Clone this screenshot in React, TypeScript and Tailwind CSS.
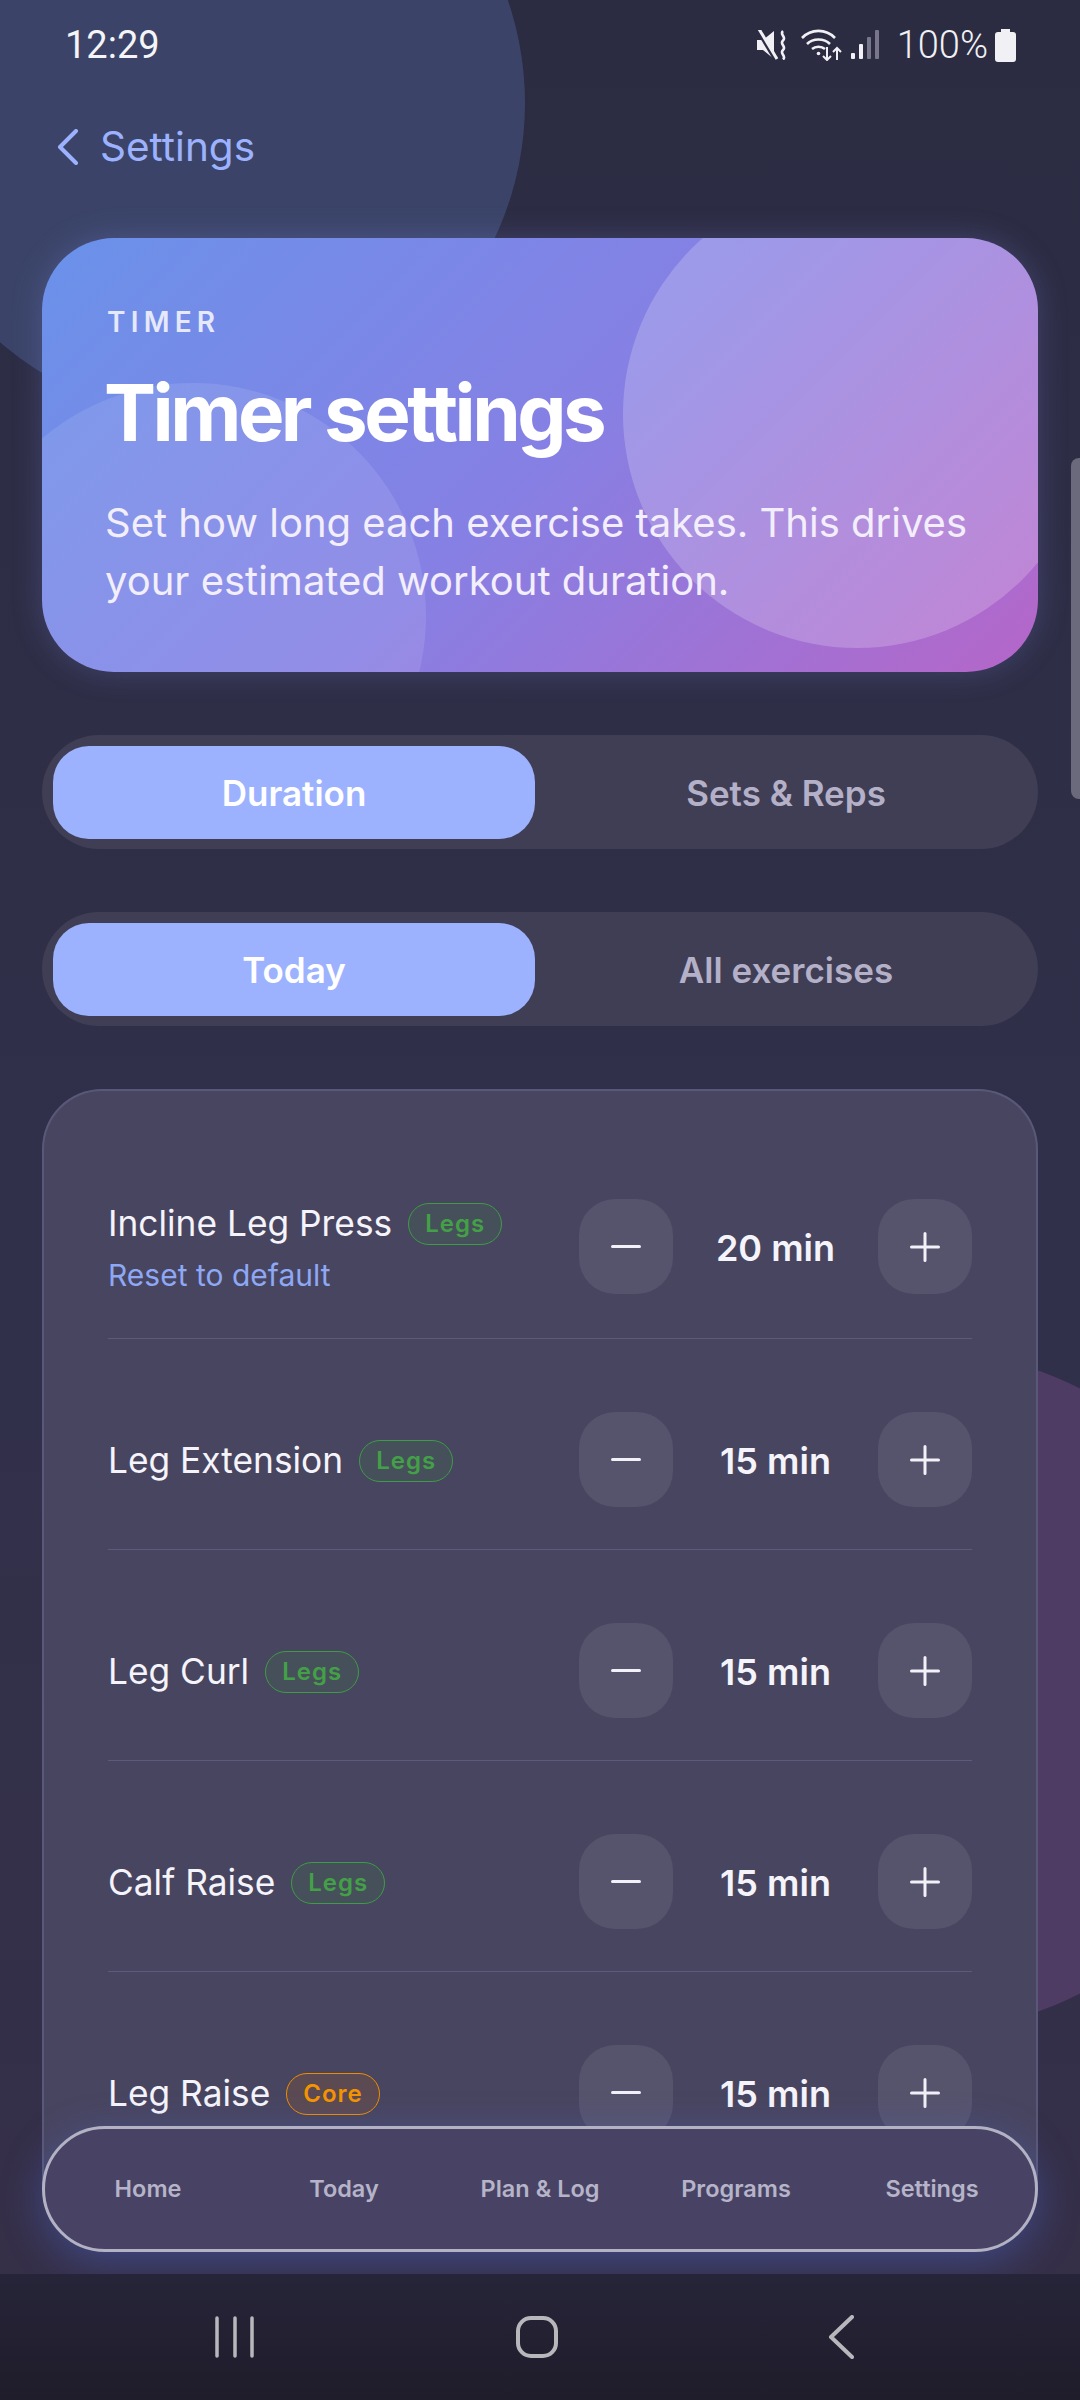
import React from "react";

const exercises = [
  { name: "Incline Leg Press", tag: "Legs", mins: 20, reset: true },
  { name: "Leg Extension", tag: "Legs", mins: 15 },
  { name: "Leg Curl", tag: "Legs", mins: 15 },
  { name: "Calf Raise", tag: "Legs", mins: 15 },
  { name: "Leg Raise", tag: "Core", mins: 15 },
];

const navItems = ["Home", "Today", "Plan & Log", "Programs", "Settings"];

const StatusIcons = () => (
  <div className="flex items-center">
    {/* muted */}
    <svg width="30" height="30" viewBox="0 0 30 30" className="mr-[14px]">
      <path d="M0 10h6l11-9v28l-11-9H0z" fill="#f1f1f5" />
      <path d="M0 -1l18 30" stroke="#2b2b42" strokeWidth="4" />
      <path d="M2 -1l18 30" stroke="#f1f1f5" strokeWidth="3" />
      <path d="M26 1c-4 3.500 4 6 0 9.500s4 6 0 9.500 4 6 0 9.500" stroke="#f1f1f5" strokeWidth="2.6" fill="none" />
    </svg>
    {/* wifi */}
    <svg width="41" height="32" viewBox="0 0 41 32" className="mr-[9px]" fill="none" stroke="#f1f1f5" strokeWidth="2.6">
      <path d="M1 9c9-9.500 24-9.500 33 0" />
      <path d="M6 15c6-6 17-6 23 0" />
      <path d="M11 20c3.500-3 9.500-3 13 0" />
      <circle cx="17.500" cy="24.500" r="1.800" fill="#f1f1f5" stroke="none" />
      <path d="M26 18v13M22 27l4 4 4-4M36 31V19M32 23l4-4 4 4" strokeWidth="2" />
    </svg>
    {/* signal */}
    <svg width="28" height="30" viewBox="0 0 28 30" className="mr-[18px]">
      <rect x="0" y="23" width="4" height="6" rx="1" fill="#f1f1f5" />
      <rect x="8" y="14" width="4" height="15" rx="1" fill="#f1f1f5" />
      <rect x="16" y="7" width="4" height="22" rx="1" fill="#77768a" />
      <rect x="24" y="0" width="4" height="29" rx="1" fill="#77768a" />
    </svg>
    <span className="font-['Roboto',sans-serif] text-[38px] font-light leading-none text-[#f1f1f5]">100%</span>
    <svg width="21" height="33" viewBox="0 0 21 33" className="ml-[7px]">
      <path d="M6 0h9v3h3a3 3 0 0 1 3 3v24a3 3 0 0 1-3 3H3a3 3 0 0 1-3-3V6a3 3 0 0 1 3-3h3z" fill="#f1f1f5" />
    </svg>
  </div>
);

const Stepper = ({ mins }: { mins: number }) => (
  <div className="flex items-center shrink-0">
    <button className="flex h-[95px] w-[94px] items-center justify-center rounded-[36px] bg-[#56536c]">
      <span className="h-[3px] w-[30px] rounded-full bg-[#f2f1f8]"></span>
    </button>
    <span className="w-[205px] pt-[2px] text-center text-[36px] font-semibold leading-none text-[#f5f4fb]">{mins} min</span>
    <button className="relative flex h-[95px] w-[94px] items-center justify-center rounded-[36px] bg-[#56536c]">
      <svg width="30" height="30" viewBox="0 0 30 30" stroke="#f2f1f8" strokeWidth="3" strokeLinecap="round">
        <path d="M1.500 15h27M15 1.500v27" />
      </svg>
    </button>
  </div>
);

const ExerciseRow = ({ name, tag, mins, reset, last }: { name: string; tag: string; mins: number; reset?: boolean; last?: boolean }) => (
  <div className={`flex items-center justify-between ${last ? "" : "border-b border-[#5e5a7c]"} ${reset ? "pt-[108px] pb-[44px]" : "pt-[73px] pb-[42px]"}`}>
    <div className="min-w-0 pt-[2px]">
      <div className="flex items-center">
        <span className="text-[35.300px] leading-[44px] text-[#f5f4fb]">{name}</span>
        <span
          className={`ml-[16px] flex h-[42px] items-center rounded-full border px-[16px] text-[24px] font-semibold tracking-[1px] ${
            tag === "Core"
              ? "border-[#f08c00] bg-[#5b4a52] text-[#f59300]"
              : "border-[#3d9c45] bg-[#46505a] text-[#43a047]"
          }`}
        >
          {tag}
        </span>
      </div>
      {reset && <div className="mt-[10px] text-[30px] leading-[38px] text-[#8ea8f5]">Reset to default</div>}
    </div>
    <Stepper mins={mins} />
  </div>
);

const SegmentedControl = ({ active, other }: { active: string; other: string }) => (
  <div className="flex h-[114px] items-center rounded-full bg-[#403e55] px-[11px]">
    <div className="flex h-[93px] w-[482px] items-center justify-center rounded-[36px] bg-[#9db2fe] pt-[2px] text-[35px] font-semibold text-white">
      {active}
    </div>
    <div className="ml-[10px] flex-1 pt-[2px] text-center text-[35px] font-semibold text-[#b3b0c8]">{other}</div>
  </div>
);

export default function App() {
  return (
    <div className="relative h-[2400px] w-[1080px] overflow-hidden bg-gradient-to-b from-[#2b2b42] via-[#30304a] to-[#362f48] font-['Inter',sans-serif]">
      {/* background blobs */}
      <div className="absolute left-[-109px] top-[-214px] h-[634px] w-[634px] rounded-full bg-[#3b4468]"></div>
      <div className="absolute left-[585px] top-[1351px] h-[680px] w-[680px] rounded-full bg-[#4f3c64]"></div>

      <div className="relative flex h-full flex-col">
        {/* status bar */}
        <div className="flex h-[90px] items-center justify-between pl-[65px] pr-[64px]">
          <span className="font-['Roboto',sans-serif] text-[38px] leading-none text-[#f5f5f8]">12:29</span>
          <StatusIcons />
        </div>

        {/* back link */}
        <div className="mt-[29px] flex h-[56px] items-center pl-[57px] text-[40.500px] text-[#9db2fe]">
          <svg width="22" height="36" viewBox="0 0 22 36" fill="none" stroke="#9db2fe" strokeWidth="4" strokeLinecap="round" strokeLinejoin="round">
            <path d="M19 2L3 18l16 16" />
          </svg>
          <span className="ml-[21px]">Settings</span>
        </div>

        <div className="flex flex-col px-[42px] pt-[63px]">
          {/* hero */}
          <div className="relative h-[434px] overflow-hidden rounded-[72px] bg-[linear-gradient(135deg,#6a92ea_0%,#8680e4_50%,#b566c8_100%)] px-[65px] pt-[68px] shadow-[0_0_30px_rgba(130,140,230,0.25)]">
            <div className="absolute left-[581px] top-[-58px] h-[468px] w-[468px] rounded-full bg-white/20"></div>
            <div className="absolute left-[-82px] top-[145px] h-[466px] w-[466px] rounded-full bg-white/10"></div>
            <div className="relative">
              <div className="text-[28px] font-semibold leading-[32px] tracking-[5.200px] text-[#e6e8fb]">TIMER</div>
              <h1 className="ml-[-3px] mt-[29px] text-[78px] font-bold leading-[92px] tracking-[-3.500px] text-white">Timer settings</h1>
              <p className="ml-[-2px] mt-[35px] text-[40px] leading-[58px] text-[#f3eefb]">
                Set how long each exercise takes. This drives your estimated workout duration.
              </p>
            </div>
          </div>

          <div className="mt-[63px]">
            <SegmentedControl active="Duration" other="Sets &amp; Reps" />
          </div>
          <div className="mt-[63px]">
            <SegmentedControl active="Today" other="All exercises" />
          </div>

          {/* exercise list */}
          <div className="mt-[63px] rounded-t-[60px] border-x-2 border-t-2 border-[#5a5878] bg-[#484560] px-[64px] pb-[8px]">
            {exercises.map((ex, i) => (
              <ExerciseRow key={ex.name} {...ex} last={i === exercises.length - 1} />
            ))}
          </div>
        </div>
      </div>

      {/* scrollbar */}
      <div className="absolute right-0 top-[458px] h-[341px] w-[9px] rounded-l-[8px] bg-[#6b6a7c]"></div>

      {/* bottom tabs */}
      <div className="absolute left-[42px] top-[2126px] flex h-[126px] w-[996px] items-center rounded-full border-[3px] border-[#b3b2c4] bg-[#484365] px-[5px] shadow-[0_10px_40px_rgba(80,110,220,0.4)]">
        {navItems.map((item) => (
          <div key={item} className="flex-1 text-center text-[23.500px] font-semibold text-[#b6b4c8]">
            {item}
          </div>
        ))}
      </div>

      {/* system nav */}
      <div className="absolute inset-x-0 bottom-0 flex h-[126px] items-center bg-gradient-to-b from-[#262438] to-[#1f1d2b] pl-[215px]">
        <svg width="40" height="42" viewBox="0 0 40 42" fill="none" stroke="#b8b8bc" strokeWidth="3.500" strokeLinecap="round">
          <path d="M2 2v38M20 2v38M37 2v38" />
        </svg>
        <svg width="44" height="44" viewBox="0 0 44 44" fill="none" stroke="#b8b8bc" strokeWidth="4" className="ml-[260px]">
          <rect x="3" y="3" width="38" height="38" rx="13" />
        </svg>
        <svg width="26" height="44" viewBox="0 0 26 44" fill="none" stroke="#b8b8bc" strokeWidth="4" strokeLinecap="round" strokeLinejoin="round" className="ml-[269px]">
          <path d="M24 2L3 22l21 20" />
        </svg>
      </div>
    </div>
  );
}
